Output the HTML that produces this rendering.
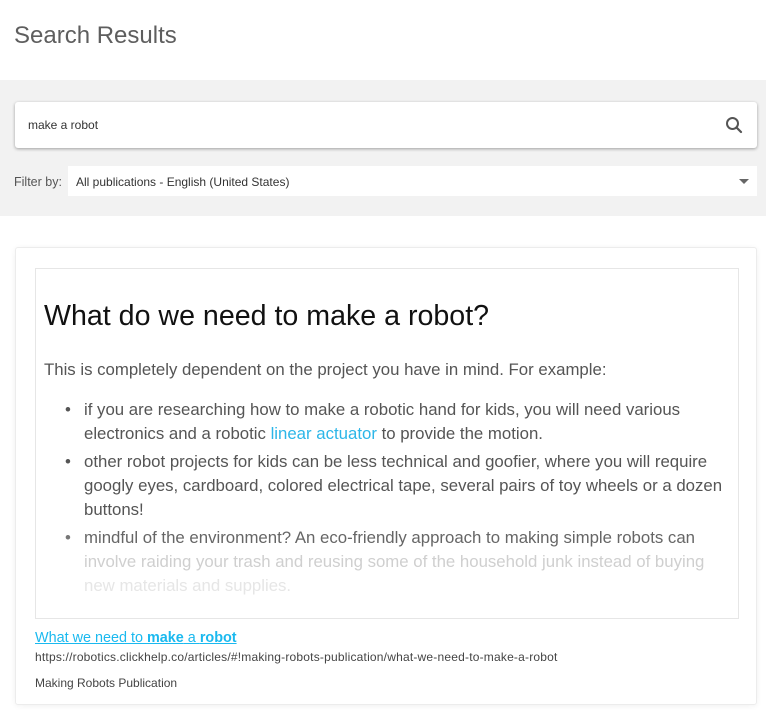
<!DOCTYPE html>
<html><head><meta charset="utf-8"><style>
*{margin:0;padding:0;box-sizing:border-box}
body{width:766px;height:711px;background:#fff;font-family:"Liberation Sans",sans-serif;position:relative;overflow:hidden;color:#444}
.a{position:absolute;white-space:nowrap}
</style></head><body>
<div class="a" style="left:14px;top:22px;font-size:24px;color:#5e5e5e">Search Results</div>
<div class="a" style="left:0;top:80px;width:766px;height:136px;background:#f2f2f2"></div>
<div class="a" style="left:15px;top:102px;width:742px;height:46px;background:#fff;border-radius:3px;box-shadow:0 1px 3px rgba(0,0,0,.35)"></div>
<div class="a" style="left:28px;top:118px;font-size:12px;color:#333">make a robot</div>
<svg class="a" style="left:725px;top:116px" width="18" height="18" viewBox="0 0 18 18"><circle cx="7.5" cy="7.5" r="5.5" fill="none" stroke="#555" stroke-width="2"/><path d="M11.5 11.5L16 16" stroke="#555" stroke-width="2.2" stroke-linecap="round"/></svg>
<div class="a" style="left:14px;top:175px;font-size:12.5px;color:#555">Filter by:</div>
<div class="a" style="left:68px;top:166px;width:689px;height:30px;background:#fff"></div>
<div class="a" style="left:76px;top:175px;font-size:12px;color:#333">All publications - English (United States)</div>
<div class="a" style="left:739px;top:179px;width:0;height:0;border-left:5px solid transparent;border-right:5px solid transparent;border-top:5px solid #666"></div>
<div class="a" style="left:15px;top:247px;width:742px;height:458px;border:1px solid #ececec;border-radius:3px;box-shadow:0 1px 6px rgba(0,0,0,.06)"></div>
<div class="a" style="left:35px;top:268px;width:704px;height:351px;border:1px solid #e6e6e6"></div>
<div class="a" style="left:44px;top:300px;font-size:28.6px;color:#111">What do we need to make a robot?</div>
<div style="position:absolute;left:44px;top:358px;font-size:16.8px;line-height:24px;color:#555;white-space:nowrap">
<div>This is completely dependent on the project you have in mind. For example:</div>
<div style="position:absolute;left:40px;top:40px">
<div style="position:absolute;left:-19px;top:0">•</div>
<div>if you are researching how to make a robotic hand for kids, you will need various</div>
<div>electronics and a robotic <span style="color:#2cb6e8">linear actuator</span> to provide the motion.</div>
<div style="position:absolute;left:-19px;top:52px">•</div>
<div style="margin-top:4px">other robot projects for kids can be less technical and goofier, where you will require</div>
<div>googly eyes, cardboard, colored electrical tape, several pairs of toy wheels or a dozen</div>
<div>buttons!</div>
<div style="position:absolute;left:-19px;top:128px;color:#777">•</div>
<div style="margin-top:4px;color:#666">mindful of the environment? An eco-friendly approach to making simple robots can</div>
<div style="color:#cfcfcf">involve raiding your trash and reusing some of the household junk instead of buying</div>
<div style="color:#e6e6e6">new materials and supplies.</div>
</div></div>
<div class="a" style="left:35px;top:630px;font-size:14.4px;color:#1ab9ef;text-decoration:underline">What we need to <b>make</b> a <b>robot</b></div>
<div class="a" style="left:35px;top:650px;font-size:12px;letter-spacing:0.2px;color:#444">https://robotics.clickhelp.co/articles/#!making-robots-publication/what-we-need-to-make-a-robot</div>
<div class="a" style="left:35px;top:676px;font-size:12px;color:#444">Making Robots Publication</div>
</body></html>
